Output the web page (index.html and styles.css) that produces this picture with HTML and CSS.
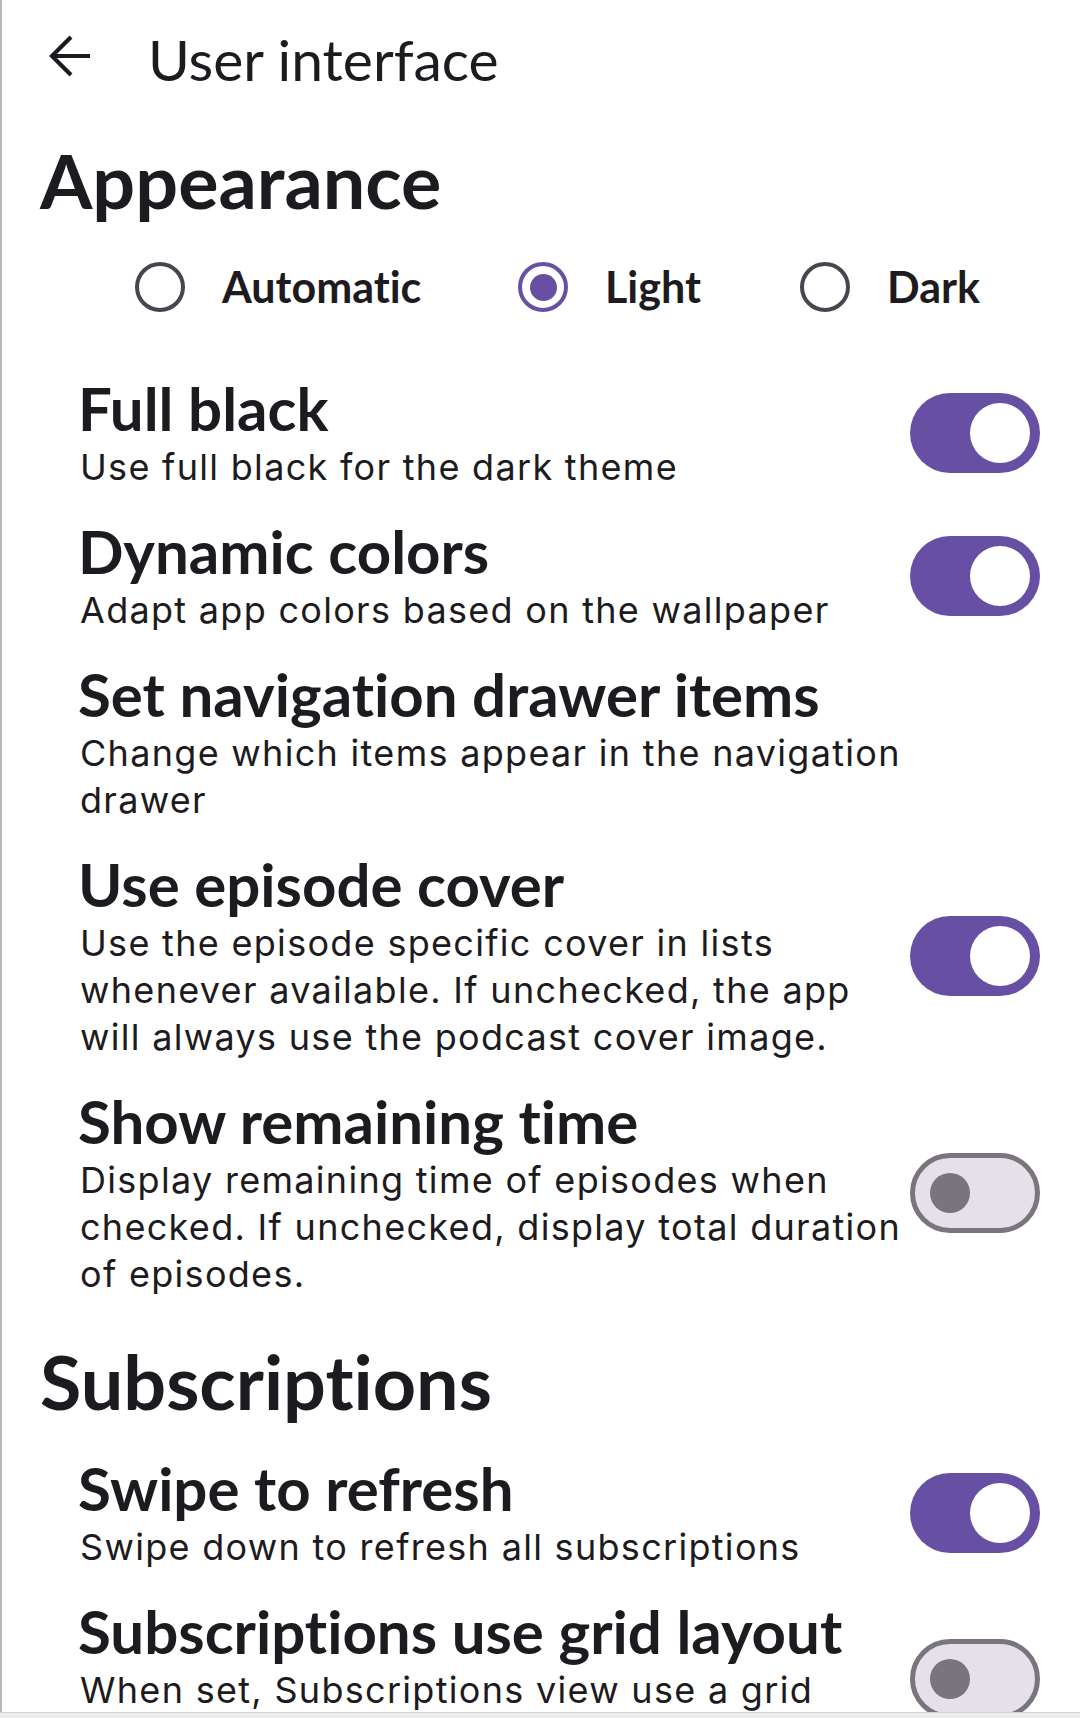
FILE: index.html
```
<!DOCTYPE html>
<html lang="en">
<head>
<meta charset="utf-8">
<title>User interface</title>
<link rel="stylesheet" href="styles.css">
</head>
<body>
<div class="page">
  <header class="topbar">
    <svg class="back" width="44" height="44" viewBox="0 0 44 44" aria-hidden="true">
      <path d="M4 22 H42 M23 3 L4 22 L23 41" fill="none" stroke="#1d1b20" stroke-width="4.2" stroke-linecap="butt" stroke-linejoin="miter"/>
    </svg>
    <h1 class="screen-title">User interface</h1>
  </header>

  <h2 class="section">Appearance</h2>

  <div class="theme-choice">
    <div class="choice"><span class="radio"></span><span class="choice-label">Automatic</span></div>
    <div class="choice"><span class="radio checked"><span class="dot"></span></span><span class="choice-label">Light</span></div>
    <div class="choice"><span class="radio"></span><span class="choice-label">Dark</span></div>
  </div>

  <div class="prefs first">
    <div class="pref">
      <div class="text">
        <div class="title">Full black</div>
        <div class="desc">Use full black for the dark theme</div>
      </div>
      <div class="switch on"><span class="thumb"></span></div>
    </div>
    <div class="pref">
      <div class="text">
        <div class="title">Dynamic colors</div>
        <div class="desc">Adapt app colors based on the wallpaper</div>
      </div>
      <div class="switch on"><span class="thumb"></span></div>
    </div>
    <div class="pref">
      <div class="text">
        <div class="title">Set navigation drawer items</div>
        <div class="desc">Change which items appear in the navigation drawer</div>
      </div>
      <div class="widget-space"></div>
    </div>
    <div class="pref">
      <div class="text">
        <div class="title">Use episode cover</div>
        <div class="desc">Use the episode specific cover in lists whenever available. If unchecked, the app will always use the podcast cover image.</div>
      </div>
      <div class="switch on"><span class="thumb"></span></div>
    </div>
    <div class="pref">
      <div class="text">
        <div class="title">Show remaining time</div>
        <div class="desc">Display remaining time of episodes when checked. If unchecked, display total duration of episodes.</div>
      </div>
      <div class="switch off"><span class="thumb"></span></div>
    </div>
  </div>

  <h2 class="section subs">Subscriptions</h2>

  <div class="prefs second">
    <div class="pref">
      <div class="text">
        <div class="title">Swipe to refresh</div>
        <div class="desc">Swipe down to refresh all subscriptions</div>
      </div>
      <div class="switch on"><span class="thumb"></span></div>
    </div>
    <div class="pref">
      <div class="text">
        <div class="title">Subscriptions use grid layout</div>
        <div class="desc">When set, Subscriptions view use a grid layout.</div>
      </div>
      <div class="switch off"><span class="thumb"></span></div>
    </div>
  </div>
</div>
<div class="navbar"></div>
</body>
</html>
```
FILE: styles.css
```
html, body {
  margin: 0;
  padding: 0;
  height: 100%;
  overflow: hidden;
  background: #ffffff;
}

body {
  font-family: "Lato", "Noto Sans", sans-serif;
  color: #1d1b20;
  font-variant-ligatures: none;
}

.page {
  height: 100%;
  box-sizing: border-box;
  border-left: 2px solid #b9b9b9;
}

/* top app bar */
.topbar {
  display: flex;
  align-items: flex-start;
  padding: 27px 0 0 46px;
  height: 64px;
}

.back {
  display: block;
  flex: none;
  margin-top: 7px;
}

.screen-title {
  margin: 0 0 0 56px;
  font-size: 57px;
  font-weight: 400;
  line-height: 64px;
}

/* section headings */
.section {
  margin: 45px 0 0 0;
  padding-left: 38px;
  font-size: 75.5px;
  font-weight: 700;
  line-height: 88px;
}

.section.subs {
  margin-top: 27px;
}

/* theme radio group */
.theme-choice {
  display: grid;
  grid-template-columns: 383px 282px auto;
  margin-top: 38px;
  padding-left: 133px;
  height: 50px;
}

.choice {
  display: flex;
  align-items: center;
  gap: 37px;
}

.radio {
  flex: none;
  width: 50px;
  height: 50px;
  box-sizing: border-box;
  border-radius: 50%;
  border: 4.5px solid #49454f;
  display: flex;
  align-items: center;
  justify-content: center;
}

.radio.checked {
  border-color: #6750a4;
}

.dot {
  width: 27px;
  height: 27px;
  border-radius: 50%;
  background: #6750a4;
}

.choice-label {
  font-size: 43px;
  font-weight: 700;
  line-height: 50px;
}

/* preference rows */
.prefs.first {
  margin-top: 48px;
}

.prefs.second {
  margin-top: 15px;
}

.pref {
  display: flex;
  align-items: center;
  padding: 14px 40px 12px 76px;
}

.text {
  flex: 1;
  min-width: 0;
}

.title {
  font-size: 60px;
  font-weight: 700;
  line-height: 68px;
}

.desc {
  font-family: "Inter", "Lato", sans-serif;
  font-size: 36px;
  font-weight: 400;
  line-height: 47px;
  letter-spacing: 1.3px;
  margin-top: 2px;
  padding-left: 2px;
}

.widget-space {
  flex: none;
  width: 100px;
}

/* switches */
.switch {
  flex: none;
  width: 130px;
  height: 80px;
  box-sizing: border-box;
  border-radius: 40px;
  display: flex;
  align-items: center;
}

.switch.on {
  background: #6750a4;
  justify-content: flex-end;
  padding-right: 10px;
}

.switch.on .thumb {
  width: 60px;
  height: 60px;
  border-radius: 50%;
  background: #ffffff;
}

.switch.off {
  background: #e6e0e9;
  border: 5px solid #79747e;
  padding-left: 15px;
}

.switch.off .thumb {
  width: 40px;
  height: 40px;
  border-radius: 50%;
  background: #79747e;
}

/* system gesture bar strip at the bottom */
.navbar {
  position: fixed;
  left: 0;
  right: 0;
  bottom: 0;
  height: 5px;
  background: #ececec;
  border-top: 1px solid #d4d4d4;
}
```
